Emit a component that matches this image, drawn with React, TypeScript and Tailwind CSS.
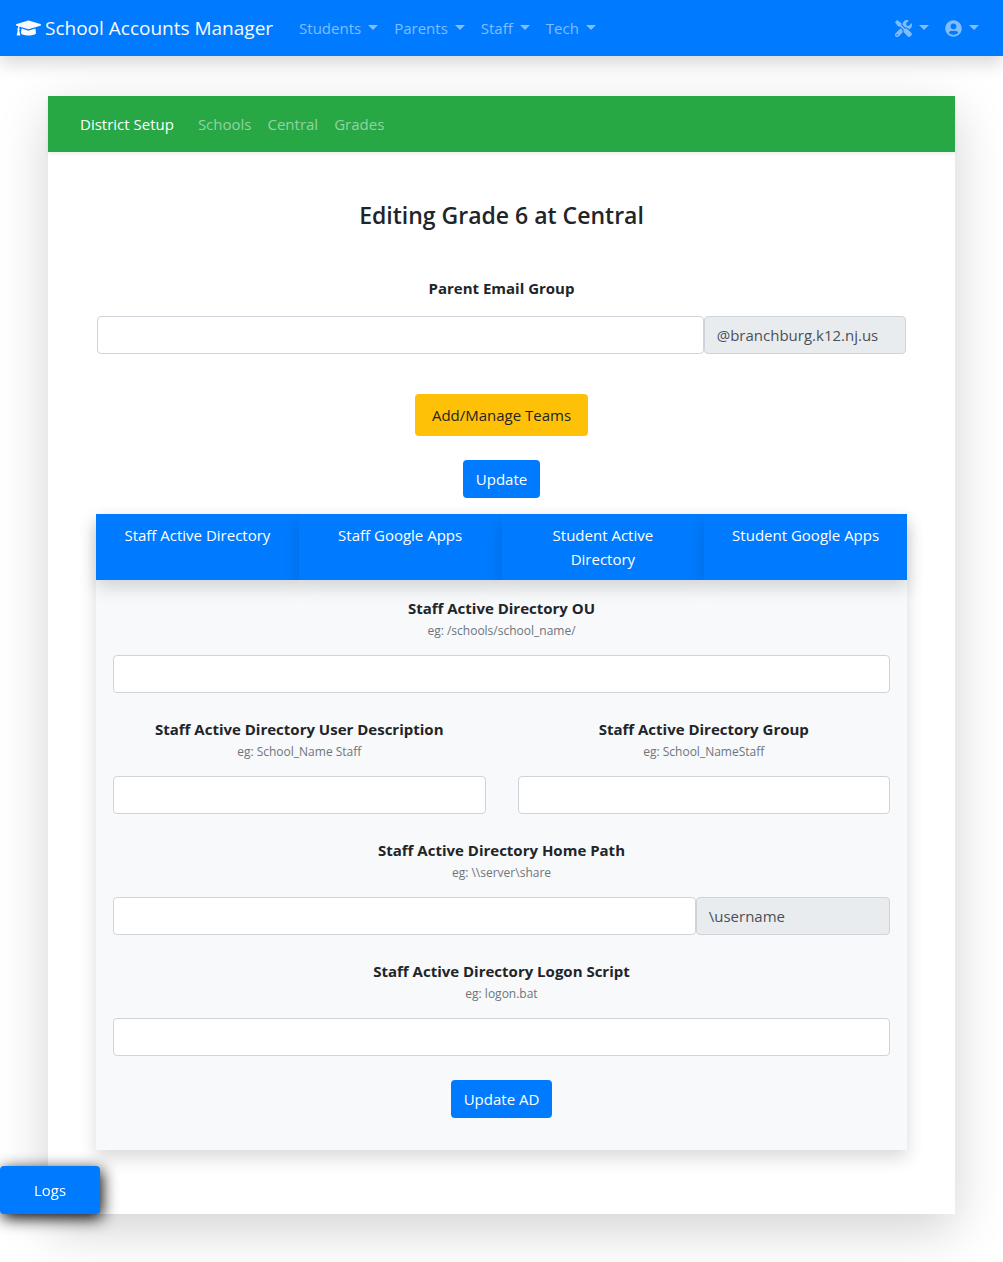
import type { ReactNode } from "react";
import { FaGraduationCap, FaTools, FaUserCircle } from "react-icons/fa";

function Caret() {
  return (
    <span
      aria-hidden="true"
      className="mb-[2px] ml-[7px] h-0 w-0 border-x-5 border-t-5 border-x-transparent border-t-current"
    />
  );
}

function NavMenu({ label, children }: { label: string; children: ReactNode }) {
  return (
    <button
      type="button"
      aria-label={label}
      aria-haspopup="menu"
      className="flex h-10 items-center px-2 text-white/50 hover:text-white/75"
    >
      {children}
      <Caret />
    </button>
  );
}

const inputClass =
  "h-[38px] w-full min-w-0 rounded border border-[#ced4da] bg-white px-3 text-[#495057] outline-none focus:border-[#80bdff]";

type FieldProps = { id: string; label: string; hint?: string; suffix?: string };

function Field({ id, label, hint, suffix }: FieldProps) {
  return (
    <div className="min-w-0 flex-1 text-center">
      <label htmlFor={id} className="block font-bold leading-6">
        {label}
      </label>
      {hint && <small className="-mb-[3px] block text-xs leading-[22px] text-[#6c757d]">{hint}</small>}
      <div className="mt-4 flex">
        <input id={id} type="text" className={inputClass} />
        {suffix && (
          <span className="flex h-[38px] w-1/4 shrink-0 items-center rounded border border-[#ced4da] bg-[#e9ecef] px-3 text-[#495057]">
            {suffix}
          </span>
        )}
      </div>
    </div>
  );
}

const tabs = ["Staff Active Directory", "Staff Google Apps", "Student Active Directory", "Student Google Apps"];
const menus = ["Students", "Parents", "Staff", "Tech"];
const crumbs = ["Schools", "Central", "Grades"];

export default function App() {
  return (
    <div className="min-h-screen bg-white pb-12 font-['Open_Sans',sans-serif] text-[15px] leading-6 text-[#212529]">
      <nav className="relative z-10 flex h-14 items-center bg-[#007bff] px-4 shadow-[0_8px_16px_rgba(0,0,0,0.15)]">
        <a href="#home" className="mr-[18px] flex items-center gap-1 text-[19px] text-[#f8f9fa]">
          <FaGraduationCap className="h-5 w-[25px]" />
          School Accounts Manager
        </a>
        {menus.map((m) => (
          <NavMenu key={m} label={m}>
            {m}
          </NavMenu>
        ))}
        <div className="ml-auto flex">
          <NavMenu label="Tools">
            <FaTools className="size-[17px]" />
          </NavMenu>
          <NavMenu label="Account">
            <FaUserCircle className="size-[17px]" />
          </NavMenu>
        </div>
      </nav>

      <main className="mx-12 mt-10 bg-white pb-16 shadow-[0_16px_48px_rgba(0,0,0,0.175)]">
        <nav className="flex h-14 items-center bg-[#28a745] px-8 shadow-[0_2px_4px_rgba(0,0,0,0.075)]">
          <a href="#district" className="mr-4 text-white">
            District Setup
          </a>
          {crumbs.map((c) => (
            <a key={c} href={"#" + c.toLowerCase()} className="px-2 text-white/50">
              {c}
            </a>
          ))}
        </nav>

        <div className="px-12 pt-12">
          <h1 className="text-center text-[23px] leading-[30px] font-semibold">Editing Grade 6 at Central</h1>
          <form className="mt-[46px] px-px" onSubmit={(e) => e.preventDefault()}>
            <Field id="parent-group" label="Parent Email Group" suffix="@branchburg.k12.nj.us" />
            <div className="mt-10 flex flex-col items-center gap-6">
              <button type="button" className="h-[42px] rounded bg-[#ffc107] px-[17px]">
                Add/Manage Teams
              </button>
              <button type="submit" className="h-[38px] rounded bg-[#007bff] px-[13px] text-white">
                Update
              </button>
            </div>
          </form>

          <section className="mt-4 bg-[#f8f9fa] shadow-[0_8px_16px_rgba(0,0,0,0.15)]">
            <div role="tablist" className="grid grid-cols-4">
              {tabs.map((t, i) => (
                <button
                  key={t}
                  type="button"
                  role="tab"
                  aria-selected={i === 0}
                  className="flex min-h-[66px] items-start justify-center bg-[#007bff] px-5 py-[9px] text-white shadow-[0_8px_16px_rgba(0,0,0,0.15)]"
                >
                  {t}
                </button>
              ))}
            </div>
            <form className="flex flex-col gap-6 px-[17px] pt-4 pb-8" onSubmit={(e) => e.preventDefault()}>
              <Field id="ad-ou" label="Staff Active Directory OU" hint="eg: /schools/school_name/" />
              <div className="flex gap-8">
                <Field id="ad-desc" label="Staff Active Directory User Description" hint="eg: School_Name Staff" />
                <Field id="ad-group" label="Staff Active Directory Group" hint="eg: School_NameStaff" />
              </div>
              <Field id="ad-home" label="Staff Active Directory Home Path" hint="eg: \\server\share" suffix="\username" />
              <Field id="ad-logon" label="Staff Active Directory Logon Script" hint="eg: logon.bat" />
              <button type="submit" className="h-[38px] self-center rounded bg-[#007bff] px-[13px] text-white">
                Update AD
              </button>
            </form>
          </section>
        </div>
      </main>

      <button
        type="button"
        className="fixed bottom-12 left-0 z-20 h-12 w-[100px] rounded bg-[#007bff] text-white shadow-[2px_4px_16px_#000]"
      >
        Logs
      </button>
    </div>
  );
}
